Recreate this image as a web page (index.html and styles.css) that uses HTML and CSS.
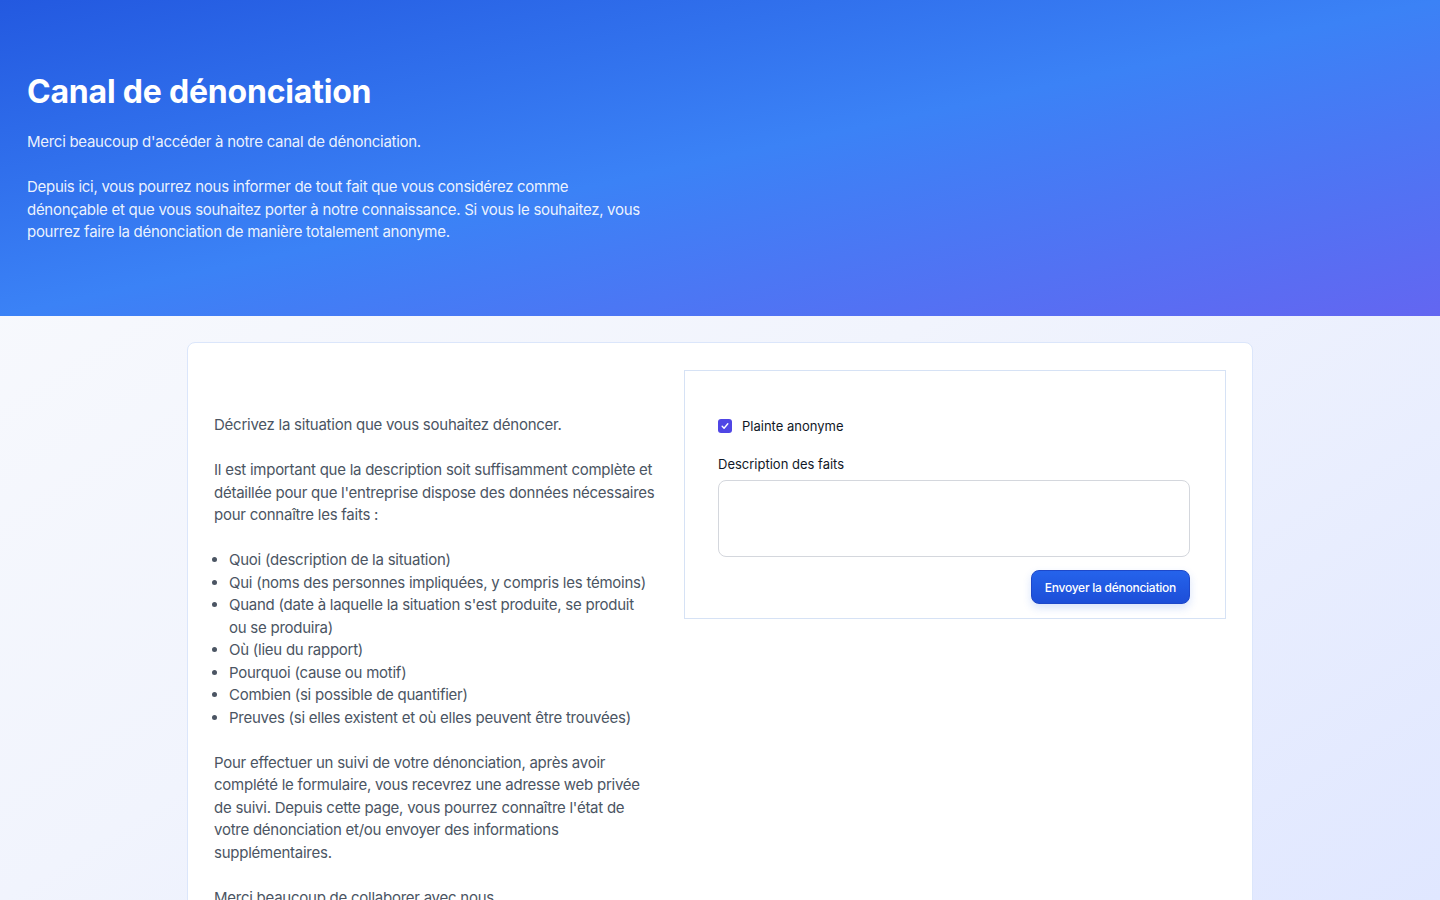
FILE: index.html
```html
<!DOCTYPE html>
<html lang="fr">
<head>
  <meta charset="UTF-8" />
  <meta name="viewport" content="width=device-width, initial-scale=1.0"/>
  <title>Canal de dénonciation</title>
  <link rel="stylesheet" href="styles.css">
</head>
<body>

  <header class="hero">
    <h1>Canal de dénonciation</h1>
    <div class="hero-text">
      <p>Merci beaucoup d'accéder à notre canal de dénonciation.</p>
      <p>Depuis ici, vous pourrez nous informer de tout fait que vous considérez comme dénonçable et que vous souhaitez porter à notre connaissance. Si vous le souhaitez, vous pourrez faire la dénonciation de manière totalement anonyme.</p>
    </div>
  </header>

  <main class="page">
    <div class="report-card">
      <div class="instructions">
        <p>Décrivez la situation que vous souhaitez dénoncer.</p>
        <p>Il est important que la description soit suffisamment complète et détaillée pour que l'entreprise dispose des données nécessaires pour connaître les faits :</p>
        <ul>
          <li>Quoi (description de la situation)</li>
          <li>Qui (noms des personnes impliquées, y compris les témoins)</li>
          <li>Quand (date à laquelle la situation s'est produite, se produit<br>ou se produira)</li>
          <li>Où (lieu du rapport)</li>
          <li>Pourquoi (cause ou motif)</li>
          <li>Combien (si possible de quantifier)</li>
          <li>Preuves (si elles existent et où elles peuvent être trouvées)</li>
        </ul>
        <p>Pour effectuer un suivi de votre dénonciation, après avoir complété le formulaire, vous recevrez une adresse web privée de suivi. Depuis cette page, vous pourrez connaître l'état de votre dénonciation et/ou envoyer des informations supplémentaires.</p>
        <p>Merci beaucoup de collaborer avec nous.</p>
      </div>

      <form class="report-form" onsubmit="return false">
        <label class="check-row">
          <input type="checkbox" checked>
          <span class="check-box">
            <svg viewBox="0 0 16 16" width="10" height="10"><path d="M3.5 8.5l3 3 6-7" fill="none" stroke="#fff" stroke-width="2.2" stroke-linecap="round" stroke-linejoin="round"/></svg>
          </span>
          Plainte anonyme
        </label>
        <label class="field-label" for="facts">Description des faits</label>
        <textarea id="facts"></textarea>
        <div class="form-actions">
          <button type="submit">Envoyer la dénonciation</button>
        </div>
      </form>
    </div>
  </main>

</body>
</html>
```

FILE: styles.css
```css
body {
  font-family: 'Inter', 'Noto Sans', sans-serif;
  margin: 0;
  padding: 0;
  min-height: 100vh;
  background: linear-gradient(to bottom right, #fafbfd 0%, #f1f4fd 50%, #e0e7ff 100%);
  background-attachment: fixed;
  color: #4b5563;
}

.hero {
  height: 316px;
  box-sizing: border-box;
  padding: 71px 27px 0;
  color: #fff;
  background: linear-gradient(to bottom right, #2359e0 0%, #3b82f6 50%, #6366f1 100%);
}
.hero h1 {
  margin: 0;
  font-size: 32px;
  font-weight: 700;
  line-height: 42px;
  letter-spacing: -0.2px;
}
.hero-text {
  max-width: 618px;
  margin-top: 18px;
  font-size: 15px;
  line-height: 22.5px;
  letter-spacing: -0.28px;
  color: rgba(255, 255, 255, 0.92);
}
.hero-text p {
  margin: 0 0 22.5px;
}

.page {
  padding: 26px 0 0;
}
.report-card {
  width: 1066px;
  margin: 0 auto;
  box-sizing: border-box;
  padding: 27px 26px 40px;
  display: grid;
  grid-template-columns: 444px 542px;
  gap: 26px;
  align-items: start;
  background: #fff;
  border: 1px solid #dbe6fb;
  border-radius: 8px;
}

.instructions {
  padding-top: 44px;
  font-size: 15px;
  line-height: 22.5px;
  letter-spacing: -0.25px;
  color: #4b5563;
}
.instructions p {
  margin: 0 0 22.5px;
}
.instructions ul {
  margin: 0 0 22.5px;
  padding-left: 15px;
}

.report-form {
  border: 1px solid #d6e2f5;
  padding: 47px 35px 14px 33px;
  display: flex;
  flex-direction: column;
}
.check-row {
  display: flex;
  align-items: center;
  gap: 10px;
  font-size: 13px;
  color: #111827;
  cursor: pointer;
}
.check-row input {
  display: none;
}
.check-box {
  width: 14px;
  height: 14px;
  border-radius: 3px;
  background: #4f46e5;
  display: flex;
  align-items: center;
  justify-content: center;
}
.field-label {
  margin-top: 22px;
  font-size: 13px;
  color: #111827;
}
textarea {
  margin-top: 8px;
  height: 77px;
  box-sizing: border-box;
  border: 1px solid #d4d7dd;
  border-radius: 8px;
  resize: none;
  font-family: inherit;
  font-size: 13px;
  padding: 8px 10px;
}
.form-actions {
  display: flex;
  justify-content: flex-end;
  margin-top: 13px;
}
.form-actions button {
  height: 34px;
  padding: 0 13px;
  font-family: inherit;
  font-size: 12px;
  font-weight: 500;
  letter-spacing: -0.25px;
  color: #fff;
  background: linear-gradient(to bottom, #2563eb, #1d4ed8);
  border: 1px solid #1e48c9;
  border-radius: 8px;
  box-shadow: 0 4px 8px rgba(37, 99, 235, 0.18);
  cursor: pointer;
}
.form-actions button:hover {
  background: #1d4ed8;
}
```
